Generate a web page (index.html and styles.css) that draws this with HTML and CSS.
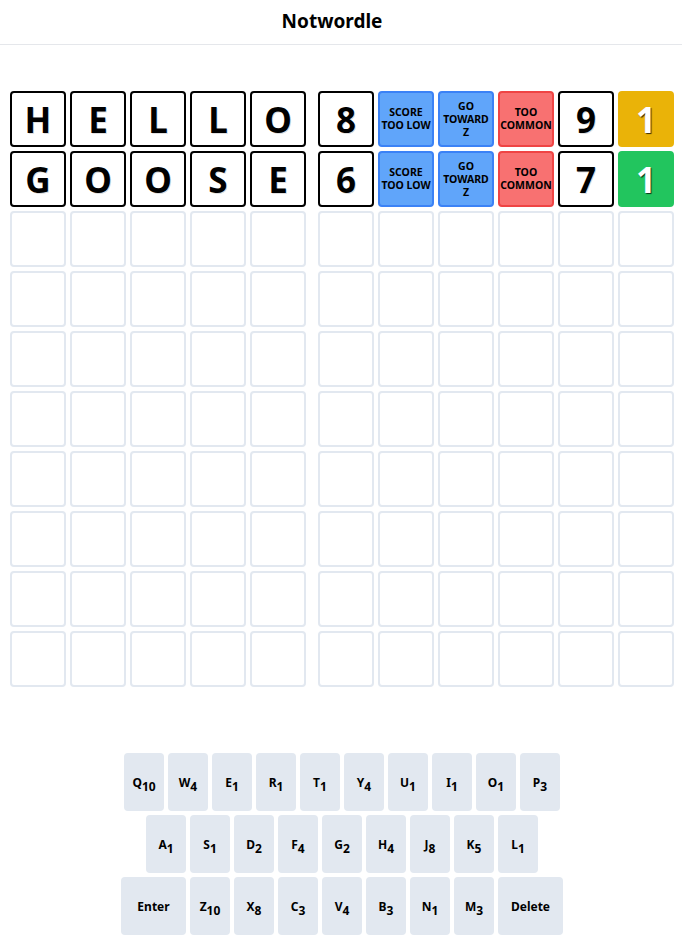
FILE: index.html
```html
<!DOCTYPE html>
<html lang="en">
<head>
    <meta charset="UTF-8">
    <meta name="viewport" content="width=device-width, initial-scale=1.0">
    <title>Notwordle</title>
    <link rel="stylesheet" href="styles.css">
</head>
<body>
    <header class="top">
        <h1 class="title">Notwordle</h1>
    </header>

    <main class="board" id="board"></main>

    <section class="keyboard">
        <div class="kb-row">
            <button class="key">Q<sub>10</sub></button>
            <button class="key">W<sub>4</sub></button>
            <button class="key">E<sub>1</sub></button>
            <button class="key">R<sub>1</sub></button>
            <button class="key">T<sub>1</sub></button>
            <button class="key">Y<sub>4</sub></button>
            <button class="key">U<sub>1</sub></button>
            <button class="key">I<sub>1</sub></button>
            <button class="key">O<sub>1</sub></button>
            <button class="key">P<sub>3</sub></button>
        </div>
        <div class="kb-row">
            <button class="key">A<sub>1</sub></button>
            <button class="key">S<sub>1</sub></button>
            <button class="key">D<sub>2</sub></button>
            <button class="key">F<sub>4</sub></button>
            <button class="key">G<sub>2</sub></button>
            <button class="key">H<sub>4</sub></button>
            <button class="key">J<sub>8</sub></button>
            <button class="key">K<sub>5</sub></button>
            <button class="key">L<sub>1</sub></button>
        </div>
        <div class="kb-row">
            <button class="key wide">Enter</button>
            <button class="key">Z<sub>10</sub></button>
            <button class="key">X<sub>8</sub></button>
            <button class="key">C<sub>3</sub></button>
            <button class="key">V<sub>4</sub></button>
            <button class="key">B<sub>3</sub></button>
            <button class="key">N<sub>1</sub></button>
            <button class="key">M<sub>3</sub></button>
            <button class="key wide">Delete</button>
        </div>
    </section>

    <script>
        const board = document.getElementById('board');

        // guesses made so far
        const guesses = [
            { word: 'HELLO', score: 8, hints: [['SCORE TOO LOW', 'blue'], ['GO TOWARD Z', 'blue'], ['TOO COMMON', 'red']], rank: 9, result: ['1', 'yellow'] },
            { word: 'GOOSE', score: 6, hints: [['SCORE TOO LOW', 'blue'], ['GO TOWARD Z', 'blue'], ['TOO COMMON', 'red']], rank: 7, result: ['1', 'green'] }
        ];

        for (let i = 0; i < 10; i++) {
            const g = guesses[i];
            const row = document.createElement('div');
            row.className = 'row';
            let html = '<div class="letters">';
            for (let j = 0; j < 5; j++) {
                html += g ? `<div class="tile filled">${g.word[j]}</div>` : '<div class="tile"></div>';
            }
            html += '</div><div class="extras">';
            if (g) {
                html += `<div class="tile filled">${g.score}</div>`;
                html += g.hints.map(h => `<div class="tile hint ${h[1]}">${h[0]}</div>`).join('');
                html += `<div class="tile filled">${g.rank}</div>`;
                html += `<div class="tile result ${g.result[1]}">${g.result[0]}</div>`;
            } else {
                for (let j = 0; j < 6; j++) html += '<div class="tile"></div>';
            }
            html += '</div>';
            row.innerHTML = html;
            board.appendChild(row);
        }
    </script>
</body>
</html>
```

FILE: styles.css
```css
* {
    box-sizing: border-box;
    margin: 0;
    padding: 0;
}

body {
    font-family: 'Noto Sans', 'Open Sans', sans-serif;
    background-color: #fff;
    color: #000;
}

.top {
    height: 45px;
    border-bottom: 1px solid #e5e7eb;
    display: flex;
    align-items: center;
    justify-content: center;
    padding-right: 18px;
}

.title {
    font-size: 19px;
    font-weight: 700;
    padding-bottom: 3px;
}

.board {
    padding-top: 46px;
    padding-left: 2px;
    display: flex;
    flex-direction: column;
    align-items: center;
    gap: 4px;
}

.row {
    display: flex;
    gap: 12px;
}

.letters, .extras {
    display: flex;
    gap: 4px;
}

.tile {
    width: 56px;
    height: 56px;
    border: 2px solid #e2e8f0;
    border-radius: 4px;
    display: flex;
    align-items: center;
    justify-content: center;
    text-align: center;
}

.tile.filled {
    border-color: #000;
    font-size: 35px;
    font-weight: 700;
    text-shadow: 1px 1px 0 rgba(0, 0, 0, 0.15);
}

.hint {
    font-size: 10.5px;
    font-weight: 700;
    line-height: 13px;
    padding: 0 1px;
}

.blue {
    background: #60a5fa;
    border-color: #3b82f6;
}

.red {
    background: #f87171;
    border-color: #ef4444;
}

.result {
    color: #fff;
    font-size: 35px;
    font-weight: 700;
    text-shadow: 1px 1px 1px rgba(0, 0, 0, 0.75);
}

.yellow {
    background: #eab308;
    border-color: #eab308;
}

.green {
    background: #22c55e;
    border-color: #22c55e;
}

.keyboard {
    margin-top: 66px;
    padding-left: 2px;
    display: flex;
    flex-direction: column;
    align-items: center;
    gap: 4px;
}

.kb-row {
    display: flex;
    gap: 4px;
}

.key {
    width: 40px;
    height: 58px;
    border: none;
    border-radius: 4px;
    background: #e2e8f0;
    color: #000;
    font-family: inherit;
    font-size: 12px;
    font-weight: 700;
    cursor: pointer;
}

.key sub {
    font-size: 12px;
    vertical-align: -4px;
    line-height: 0;
}

.key.wide {
    width: 65px;
}
```
